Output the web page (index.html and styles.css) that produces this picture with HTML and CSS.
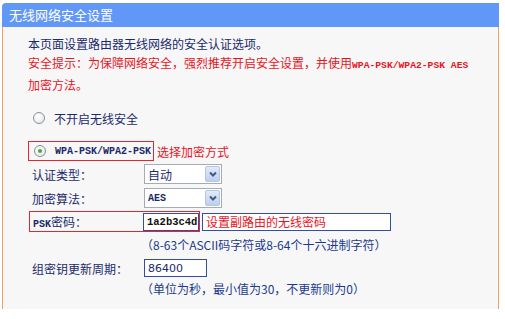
FILE: index.html
```html
<!DOCTYPE html>
<html lang="zh-CN">
<head>
<meta charset="utf-8">
<title>无线网络安全设置</title>
<link rel="stylesheet" href="styles.css">
</head>
<body>
<div class="frame">
  <div class="hd">无线网络安全设置</div>
  <div class="bd">
    <p class="intro">本页面设置路由器无线网络的安全认证选项。</p>
    <p class="warn">安全提示：为保障网络安全，强烈推荐开启安全设置，并使用<span class="mono">WPA-PSK/WPA2-PSK AES</span><br>加密方法。</p>
    <div class="radio-row r1"><span class="radio"></span><span class="rtext">不开启无线安全</span></div>
    <div class="radio-row r2">
      <span class="redbox rb-radio"><span class="radio on"></span><span class="mono rtext">WPA-PSK/WPA2-PSK</span></span>
      <span class="note">选择加密方式</span>
    </div>
    <div class="field f1">
      <span class="lbl">认证类型：</span>
      <span class="select"><span class="val">自动</span><span class="arr"><svg width="10" height="8" viewBox="0 0 10 8"><path d="M2 2.5 L5 5.5 L8 2.5" fill="none" stroke="#44597e" stroke-width="2"/></svg></span></span>
    </div>
    <div class="field f2">
      <span class="lbl">加密算法：</span>
      <span class="select"><span class="val mono">AES</span><span class="arr"><svg width="10" height="8" viewBox="0 0 10 8"><path d="M2 2.5 L5 5.5 L8 2.5" fill="none" stroke="#44597e" stroke-width="2"/></svg></span></span>
    </div>
    <div class="field f3">
      <span class="redbox rb-psk"><span class="lbl lbl-psk"><span class="mono">PSK</span>密码：</span><span class="input psk mono">1a2b3c4d</span></span>
      <span class="notebox">设置副路由的无线密码</span>
    </div>
    <p class="hint h1">（8-63个ASCII码字符或8-64个十六进制字符）</p>
    <div class="field f4">
      <span class="lbl">组密钥更新周期：</span>
      <span class="input period">86400</span>
    </div>
    <p class="hint h2">（单位为秒，最小值为30，不更新则为0）</p>
  </div>
</div>
</body>
</html>
```
FILE: styles.css
```css
html, body {
  margin: 0;
  padding: 0;
  background: #ffffff;
}
body {
  font-family: "Noto Sans CJK SC", "Liberation Sans", sans-serif;
  font-size: 12px;
  color: #1b2a6b;
}
.frame {
  margin: 3px 0 0 2px;
  width: 497px;
}
.hd {
  height: 24px;
  line-height: 23px;
  background: #6197f7;
  color: #ffffff;
  font-size: 13px;
  padding-left: 7px;
  border-top-left-radius: 4px;
}
.bd {
  background: #f7f7f7;
  border-left: 1px solid #f3a45c;
  border-right: 1px solid #f3a45c;
  padding: 8px 0 11px 25px;
}
p {
  margin: 0;
}
.mono {
  font-family: "Liberation Mono", "Courier New", monospace;
  font-size: 10px;
  font-weight: bold;
}
.intro {
  line-height: 18px;
  color: #1b2a6b;
}
.warn {
  line-height: 19px;
  color: #e8141e;
}
.warn .mono {
  font-size: 9.7px;
}
.radio-row {
  display: flex;
  align-items: center;
}
.r1 {
  margin-top: 15px;
  height: 18px;
  padding-left: 5px;
}
.r2 {
  margin-top: 14px;
  height: 20px;
}
.radio {
  width: 10px;
  height: 10px;
  border: 1px solid #8a9099;
  border-radius: 50%;
  background: radial-gradient(circle at 40% 35%, #ffffff 0%, #eef0f3 60%, #d9dde3 100%);
  position: relative;
  flex: none;
}
.radio.on::after {
  content: "";
  position: absolute;
  left: 3px;
  top: 3px;
  width: 4px;
  height: 4px;
  border-radius: 50%;
  background: #3fae34;
}
.rtext {
  margin-left: 9px;
}
.redbox {
  border: 1px solid #e5262e;
  box-sizing: border-box;
  display: flex;
  align-items: center;
}
.rb-radio {
  height: 20px;
  width: 126px;
  padding-left: 5px;
}
.rb-radio .rtext {
  margin-left: 9px;
  color: #1b2a6b;
}
.note {
  color: #e8141e;
  margin-left: 3px;
  font-size: 12px;
}
.field {
  display: flex;
  align-items: center;
}
.lbl {
  width: 112px;
  padding-left: 4px;
  flex: none;
}
.f1 {
  margin-top: 3px;
  height: 20px;
}
.f2 {
  margin-top: 4px;
  height: 20px;
}
.select {
  width: 78px;
  height: 20px;
  box-sizing: border-box;
  border: 1px solid #a5acb5;
  background: #ffffff;
  display: flex;
  align-items: center;
  justify-content: space-between;
}
.val {
  padding-left: 3px;
}
.arr {
  width: 15px;
  height: 16px;
  margin-right: 1px;
  box-sizing: border-box;
  border: 1px solid #b4c4e2;
  border-radius: 2px;
  background: linear-gradient(#e3ebfb, #bccef2);
  display: flex;
  align-items: center;
  justify-content: center;
}
.f3 {
  margin-top: 3px;
  height: 21px;
}
.rb-psk {
  margin-left: 1px;
  height: 21px;
  width: 171px;
  padding-left: 3px;
}
.lbl-psk {
  width: 110px;
  padding-left: 0;
}
.input {
  box-sizing: border-box;
  height: 18px;
  border: 1px solid #334f9c;
  background: #ffffff;
  display: flex;
  align-items: center;
  padding-left: 3px;
}
.psk {
  width: 57px;
  font-size: 10.5px;
  color: #111111;
}
.notebox {
  box-sizing: border-box;
  margin-left: 2px;
  width: 189px;
  height: 18px;
  border: 1px solid #334f9c;
  background: #ffffff;
  color: #e8141e;
  padding-left: 3px;
  display: flex;
  align-items: center;
}
.hint {
  line-height: 18px;
  padding-left: 113px;
  color: #1b3a8c;
}
.h1 {
  margin-top: 4px;
}
.f4 {
  margin-top: 5px;
  height: 18px;
}
.period {
  width: 63px;
  color: #1b2a6b;
  font-family: "DejaVu Sans", sans-serif;
  font-size: 11px;
}
.h2 {
  margin-top: 3px;
}
```
